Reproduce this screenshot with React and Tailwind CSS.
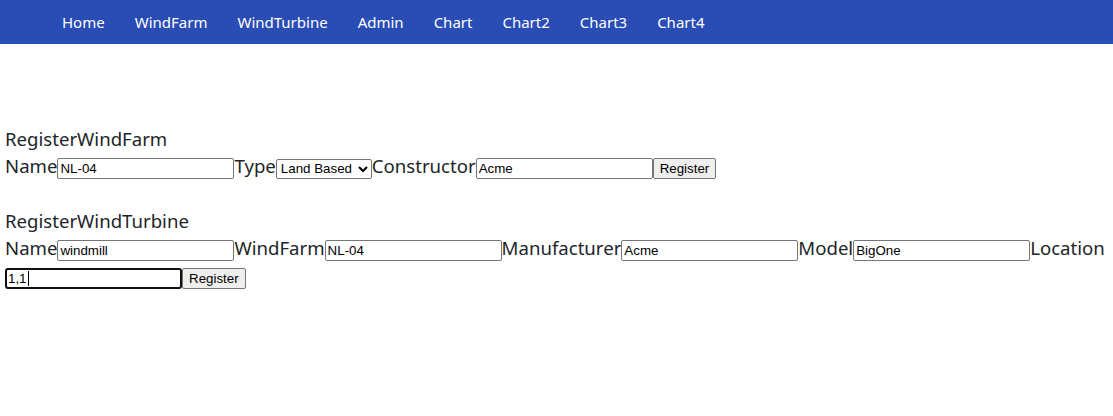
import React from "react";

const navItems = ["Home", "WindFarm", "WindTurbine", "Admin", "Chart", "Chart2", "Chart3", "Chart4"];

const inputCls =
  "inline-block align-baseline h-[21px] w-[177px] border border-[#767676] rounded-[2px] bg-white px-[2px] text-[13.33px] leading-normal text-black font-['Liberation_Sans',Arial,sans-serif] outline-none";
const buttonCls =
  "inline-block align-baseline h-[21px] border border-[#767676] rounded-[2px] bg-[#efefef] px-[6px] text-[13.33px] leading-normal text-black font-['Liberation_Sans',Arial,sans-serif]";

function Field({ label, value }) {
  return (
    <>
      {label}
      <input className={inputCls} defaultValue={value} />
    </>
  );
}

export default function App() {
  return (
    <div className="min-h-[416px] bg-white font-['Noto_Sans',sans-serif] text-[#212529]">
      {/* Top nav */}
      <nav className="flex h-[44px] items-center gap-[30px] bg-[#294cb5] pl-[62px]">
        {navItems.map((item) => (
          <a key={item} className="text-[15px] text-white">
            {item}
          </a>
        ))}
      </nav>

      <main className="px-[5px] pt-[81px]">
        {/* Wind farm */}
        <div className="text-[18.6px] leading-[27px]">RegisterWindFarm</div>
        <div className="text-[18.6px] leading-[28px]">
          <Field label="Name" value="NL-04" />
          Type
          <select className="inline-block align-baseline h-[20px] w-[96px] border border-[#767676] rounded-[2px] bg-white text-[13.33px] leading-normal text-black font-['Liberation_Sans',Arial,sans-serif]">
            <option>Land Based</option>
            <option>Offshore</option>
          </select>
          <Field label="Constructor" value="Acme" />
          <button className={buttonCls}>Register</button>
        </div>

        {/* Wind turbine */}
        <div className="mt-[27px] text-[18.6px] leading-[27px]">RegisterWindTurbine</div>
        <div className="text-[18.6px] leading-[28px]">
          <Field label="Name" value="windmill" />
          <Field label="WindFarm" value="NL-04" />
          <Field label="Manufacturer" value="Acme" />
          <Field label="Model" value="BigOne" />
          Location
          <span className="relative inline-flex">
            <input
              className="h-[21px] w-[177px] border-2 border-[#101010] rounded-[3px] bg-white px-[1px] text-[13.33px] leading-normal text-black font-['Liberation_Sans',Arial,sans-serif] outline-none"
              defaultValue="1,1"
            />
            <span className="absolute left-[23px] top-[3px] h-[15px] w-px bg-black" />
          </span>
          <button className={buttonCls}>Register</button>
        </div>
      </main>
    </div>
  );
}
